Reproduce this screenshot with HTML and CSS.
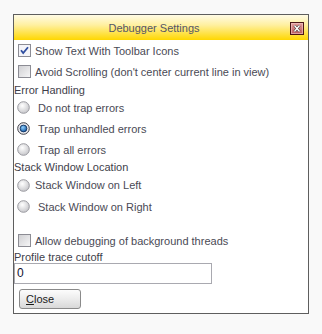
FILE: index.html
```html
<!DOCTYPE html>
<html>
<head>
<meta charset="utf-8">
<link rel="stylesheet" href="styles.css">
</head>
<body>
<div class="dialog">
  <div class="titlebar">
    <div class="title">Debugger Settings</div>
    <div class="closebox">
      <svg width="14" height="13" viewBox="0 0 14 13">
        <defs>
          <linearGradient id="cg" x1="0" y1="0" x2="0" y2="1">
            <stop offset="0" stop-color="#e7a0a0"/>
            <stop offset="1" stop-color="#b85a5a"/>
          </linearGradient>
        </defs>
        <rect x="0.5" y="0.5" width="13" height="12" fill="url(#cg)" stroke="#4a1414"/>
        <rect x="1.5" y="1.5" width="11" height="10" fill="none" stroke="#f2c8c8" stroke-opacity="0.6"/>
        <path d="M4.5 3.5 L9.5 9.5 M9.5 3.5 L4.5 9.5" stroke="#3a2a2a" stroke-width="2.6"/>
        <path d="M4.5 3.5 L9.5 9.5 M9.5 3.5 L4.5 9.5" stroke="#ffffff" stroke-width="1.4"/>
      </svg>
    </div>
  </div>
  <div class="body">
    <div class="row chk-row">
      <svg class="chk" width="13" height="13" viewBox="0 0 13 13">
        <rect x="0.5" y="0.5" width="12" height="12" fill="#f4f4f8" stroke="#8c8c94"/>
        <path d="M3 6.2 L5.2 9 L10 3.2" fill="none" stroke="#2f4ea0" stroke-width="1.8"/>
      </svg>
      <span class="lbl">Show Text With Toolbar Icons</span>
    </div>
    <div class="row chk-row">
      <svg class="chk" width="13" height="13" viewBox="0 0 13 13">
        <defs>
          <linearGradient id="ug" x1="0" y1="0" x2="1" y2="1">
            <stop offset="0" stop-color="#cfcfd2"/>
            <stop offset="1" stop-color="#f7f7f8"/>
          </linearGradient>
        </defs>
        <rect x="0.5" y="0.5" width="12" height="12" fill="url(#ug)" stroke="#8c8c94"/>
      </svg>
      <span class="lbl">Avoid Scrolling (don't center current line in view)</span>
    </div>
    <div class="row heading h1">Error Handling</div>
    <div class="row rad-row">
      <svg class="rad" width="13" height="13" viewBox="0 0 13 13">
        <defs>
          <radialGradient id="rg" cx="0.4" cy="0.35" r="0.7">
            <stop offset="0" stop-color="#ffffff"/>
            <stop offset="1" stop-color="#c4c4c8"/>
          </radialGradient>
        </defs>
        <circle cx="6.5" cy="6.5" r="5.8" fill="url(#rg)" stroke="#9a9aa0"/>
      </svg>
      <span class="lbl wide">Do not trap errors</span>
    </div>
    <div class="row rad-row">
      <svg class="rad" width="13" height="13" viewBox="0 0 13 13">
        <defs>
          <radialGradient id="bg" cx="0.4" cy="0.35" r="0.7">
            <stop offset="0" stop-color="#8fd0ff"/>
            <stop offset="1" stop-color="#0a4f9a"/>
          </radialGradient>
        </defs>
        <circle cx="6.5" cy="6.5" r="5.8" fill="#e8e8ec" stroke="#404048"/>
        <circle cx="6.5" cy="6.5" r="3.4" fill="url(#bg)" stroke="#0a2a55" stroke-width="0.8"/>
      </svg>
      <span class="lbl wide">Trap unhandled errors</span>
    </div>
    <div class="row rad-row">
      <svg class="rad" width="13" height="13" viewBox="0 0 13 13">
        <circle cx="6.5" cy="6.5" r="5.8" fill="url(#rg)" stroke="#9a9aa0"/>
      </svg>
      <span class="lbl wide">Trap all errors</span>
    </div>
    <div class="row heading h2">Stack Window Location</div>
    <div class="row rad-row r-left">
      <svg class="rad" width="13" height="13" viewBox="0 0 13 13">
        <circle cx="6.5" cy="6.5" r="5.8" fill="url(#rg)" stroke="#9a9aa0"/>
      </svg>
      <span class="lbl">Stack Window on Left</span>
    </div>
    <div class="row rad-row">
      <svg class="rad" width="13" height="13" viewBox="0 0 13 13">
        <circle cx="6.5" cy="6.5" r="5.8" fill="url(#rg)" stroke="#9a9aa0"/>
      </svg>
      <span class="lbl wide">Stack Window on Right</span>
    </div>
    <div class="spacer"></div>
    <div class="row chk-row">
      <svg class="chk" width="13" height="13" viewBox="0 0 13 13">
        <rect x="0.5" y="0.5" width="12" height="12" fill="url(#ug)" stroke="#8c8c94"/>
      </svg>
      <span class="lbl">Allow debugging of background threads</span>
    </div>
    <div class="row heading h3">Profile trace cutoff</div>
    <div class="field">0</div>
    <div class="btn"><span class="ul">C</span>lose</div>
  </div>
</div>
</body>
</html>
```

FILE: styles.css
```css
html, body {
  margin: 0;
  padding: 0;
  background: #f9f9f9;
}
body {
  font-family: "Liberation Sans", Arial, sans-serif;
  font-size: 11px;
  color: #4a4a55;
}
.dialog {
  margin: 14px 0 0 13px;
  width: 294px;
  height: 298px;
  border: 1px solid #5e5e5e;
  background: #ffffff;
  display: flex;
  flex-direction: column;
}
.titlebar {
  height: 25px;
  display: flex;
  align-items: center;
  background: linear-gradient(to bottom, #fffbe6 0%, #fff0a0 40%, #ffd700 100%);
  flex: none;
}
.title {
  flex: 1;
  text-align: center;
  color: #555566;
  font-size: 11px;
  padding-left: 4px;
}
.closebox {
  width: 14px;
  height: 13px;
  margin-right: 4px;
  margin-top: 1px;
}
.closebox svg { display: block; }
.body {
  display: flex;
  flex-direction: column;
}
.row {
  display: flex;
  align-items: center;
  flex: none;
}
.chk-row {
  height: 21px;
  padding-left: 4px;
}
.chk-row .lbl { margin-left: 4px; }
.rad-row {
  height: 21px;
  padding-left: 3px;
}
.rad-row .lbl { margin-left: 5px; }
.rad-row .lbl.wide { margin-left: 8px; }
.chk, .rad { display: block; flex: none; }
.heading {
  color: #3e3e4a;
}
.h1 { height: 15px; }
.h2 { height: 14px; }
.r-left { height: 22px; }
.spacer { height: 13px; flex: none; }
.h3 { height: 12px; }
.field {
  width: 194px;
  height: 19px;
  border: 1px solid #a9a9b0;
  font-size: 12px;
  color: #101030;
  line-height: 19px;
  padding-left: 2px;
}
.btn {
  margin: 5px 0 0 5px;
  width: 54px;
  height: 18px;
  border: 1px solid #8a8a8a;
  border-radius: 3px;
  background: linear-gradient(to bottom, #fcfcfc 0%, #ececec 50%, #d8d8d8 100%);
  color: #1a1a1a;
  line-height: 18px;
  padding-left: 6px;
}
.ul { text-decoration: underline; }
```
